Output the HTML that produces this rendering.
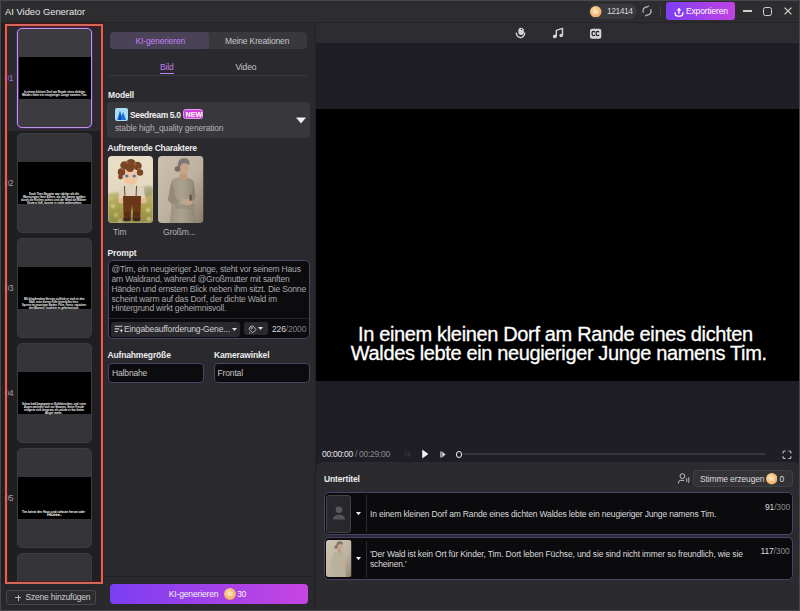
<!DOCTYPE html>
<html><head><meta charset="utf-8">
<style>
*{margin:0;padding:0;box-sizing:border-box;}
html,body{width:800px;height:611px;overflow:hidden;background:#2a292d;font-family:"Liberation Sans",sans-serif;color:#d8d8d8;}
.a{position:absolute;}
.t{position:absolute;white-space:nowrap;line-height:1;letter-spacing:-0.15px;}
</style></head>
<body>
<!-- window frame -->
<div class="a" style="left:0;top:0;width:800px;height:611px;background:#2a292d;"></div>
<!-- title bar -->
<div class="a" style="left:0;top:0;width:800px;height:22px;background:#2d2d30;"></div>
<div class="a" style="left:0;top:22px;width:800px;height:1px;background:#232326;"></div>
<div class="t" id="title" style="left:5px;top:7px;font-size:9.4px;letter-spacing:0;color:#e6e6e6;">AI Video Generator</div>

<!-- coin pill -->
<div class="a" style="left:589px;top:4px;width:48px;height:15px;border-radius:8px;background:#3a393d;"></div>
<svg class="a" style="left:590px;top:5.5px" width="11.5" height="11.5" viewBox="0 0 12 12"><defs><radialGradient id="cg590" cx="0.4" cy="0.35" r="0.7"><stop offset="0" stop-color="#fbdca8"/><stop offset="1" stop-color="#eba457"/></radialGradient></defs><circle cx="6" cy="6" r="6" fill="url(#cg590)"/><circle cx="6" cy="6" r="4.6" fill="none" stroke="#f6c98a" stroke-width="0.6"/><text x="6" y="7.9" text-anchor="middle" font-family="Liberation Sans" font-weight="bold" font-size="5.2" fill="#fff6e8" opacity="0.9">AI</text></svg>
<div class="t" id="coins" style="left:607px;top:7px;font-size:8.5px;letter-spacing:-0.48px;color:#d8d8d8;">121414</div>
<!-- refresh -->
<svg class="a" style="left:641.25px;top:5.2px" width="12" height="12" viewBox="0 0 12 12"><path d="M9.72 4.27 A4.1 4.1 0 0 1 4.94 9.96 M2.28 7.73 A4.1 4.1 0 0 1 7.06 2.04" stroke="#c4c4c6" stroke-width="1.2" fill="none"/><path d="M7.06 2.04 L7.45 0.59 M4.94 9.96 L4.55 11.41" stroke="#c4c4c6" stroke-width="1" fill="none"/></svg>
<div class="a" style="left:660px;top:6px;width:1px;height:10px;background:#444347;"></div>
<!-- export -->
<div class="a" style="left:666px;top:2px;width:69px;height:18px;border-radius:3px;background:linear-gradient(90deg,#7c3ef2,#c242e2);"></div>
<svg class="a" style="left:673.5px;top:6.5px" width="10" height="10" viewBox="0 0 10 10"><path d="M5 3 L5 6.8" stroke="#fff" stroke-width="1.3"/><path d="M2.6 3.4 L5 0.8 L7.4 3.4Z" fill="#fff"/><path d="M1.1 5.3 L1.1 6.2 Q1.1 9.1 4 9.1 L6 9.1 Q8.9 9.1 8.9 6.2 L8.9 5.3" stroke="#fff" stroke-width="1.2" fill="none"/></svg>
<div class="t" id="export" style="left:686px;top:7px;font-size:8.5px;color:#fff;">Exportieren</div>
<!-- window controls -->
<div class="a" style="left:743px;top:10.4px;width:9px;height:1.5px;background:#cfcfcf;"></div>
<div class="a" style="left:763px;top:7px;width:9px;height:9px;border:1.3px solid #d4d4d4;border-radius:2.5px;"></div>
<svg class="a" style="left:783.5px;top:7.3px" width="8" height="8" viewBox="0 0 8 8"><path d="M0.6 0.6 L7.4 7.4 M7.4 0.6 L0.6 7.4" stroke="#d4d4d4" stroke-width="1.2"/></svg>

<!-- LEFT SIDEBAR -->
<div class="a" style="left:1px;top:23px;width:103px;height:560px;background:#1f1f22;"></div>
<div class="a" style="left:7px;top:26px;width:94px;height:105px;background:#2b2a2e;"></div>
<div class="a" style="left:17px;top:28px;width:75px;height:100px;border-radius:5px;border:1.5px solid #c494ea;box-shadow:0 0 0 0.6px #5a2a90;background:#3c3b3f;"></div>
<div class="a" style="left:18.5px;top:57px;width:72px;height:42px;background:#000;"></div>
<div class="t" style="left:4.2px;top:74px;font-size:8.5px;letter-spacing:-0.2px;color:#9a6cf0;">01</div>
<svg class="a" style="left:22.5px;top:88.8px" width="63.0" height="5" viewBox="0 0 63.0 5"><text x="1" y="4" textLength="61.0" lengthAdjust="spacingAndGlyphs" font-family="Liberation Sans" font-size="3.4" font-weight="bold" fill="#ffffff">In einem kleinen Dorf am Rande eines dichten</text></svg>
<svg class="a" style="left:21px;top:91.8px" width="67" height="5" viewBox="0 0 67 5"><text x="1" y="4" textLength="65" lengthAdjust="spacingAndGlyphs" font-family="Liberation Sans" font-size="3.4" font-weight="bold" fill="#ffffff">Waldes lebte ein neugieriger Junge namens Tim.</text></svg>
<div class="a" style="left:17px;top:133px;width:75px;height:100px;border-radius:5px;border:1px solid #3d3c40;background:#353438;"></div>
<div class="a" style="left:18px;top:162px;width:73px;height:42px;background:#000;"></div>
<div class="t" style="left:4.2px;top:179px;font-size:8.5px;letter-spacing:-0.2px;color:#a0a0a4;">02</div>
<svg class="a" style="left:28px;top:190.8px" width="52" height="5" viewBox="0 0 52 5"><text x="1" y="4" textLength="50" lengthAdjust="spacingAndGlyphs" font-family="Liberation Sans" font-size="3.4" font-weight="bold" fill="#ffffff">Doch Tims Neugier war stärker als die</text></svg>
<svg class="a" style="left:21.5px;top:193.9px" width="64.5" height="5" viewBox="0 0 64.5 5"><text x="1" y="4" textLength="62.5" lengthAdjust="spacingAndGlyphs" font-family="Liberation Sans" font-size="3.4" font-weight="bold" fill="#ffffff">Warnungen ihrer Eltern, als die Sonne golden</text></svg>
<svg class="a" style="left:20px;top:196.9px" width="67" height="5" viewBox="0 0 67 5"><text x="1" y="4" textLength="65" lengthAdjust="spacingAndGlyphs" font-family="Liberation Sans" font-size="3.4" font-weight="bold" fill="#ffffff">durch die Kiefern schien und der Wind die Blätter</text></svg>
<svg class="a" style="left:26px;top:199.9px" width="57" height="5" viewBox="0 0 57 5"><text x="1" y="4" textLength="55" lengthAdjust="spacingAndGlyphs" font-family="Liberation Sans" font-size="3.4" font-weight="bold" fill="#ffffff">flüstern ließ, konnte er nicht widerstehen.</text></svg>
<div class="a" style="left:17px;top:238px;width:75px;height:100px;border-radius:5px;border:1px solid #3d3c40;background:#353438;"></div>
<div class="a" style="left:18px;top:267px;width:73px;height:42px;background:#000;"></div>
<div class="t" style="left:4.2px;top:284px;font-size:8.5px;letter-spacing:-0.2px;color:#a0a0a4;">03</div>
<svg class="a" style="left:22.5px;top:295.8px" width="62.5" height="5" viewBox="0 0 62.5 5"><text x="1" y="4" textLength="60.5" lengthAdjust="spacingAndGlyphs" font-family="Liberation Sans" font-size="3.4" font-weight="bold" fill="#ffffff">Mit klopfendem Herzen schlich er sich in den</text></svg>
<svg class="a" style="left:28px;top:298.9px" width="51" height="5" viewBox="0 0 51 5"><text x="1" y="4" textLength="49" lengthAdjust="spacingAndGlyphs" font-family="Liberation Sans" font-size="3.4" font-weight="bold" fill="#ffffff">Wald, seine kleinen Füße hinterließen leise</text></svg>
<svg class="a" style="left:21px;top:301.9px" width="66" height="5" viewBox="0 0 66 5"><text x="1" y="4" textLength="64" lengthAdjust="spacingAndGlyphs" font-family="Liberation Sans" font-size="3.4" font-weight="bold" fill="#ffffff">Spuren im moosigen Boden. Pilze, Farne, zwischen</text></svg>
<svg class="a" style="left:28px;top:304.9px" width="52" height="5" viewBox="0 0 52 5"><text x="1" y="4" textLength="50" lengthAdjust="spacingAndGlyphs" font-family="Liberation Sans" font-size="3.4" font-weight="bold" fill="#ffffff">den Bäumen, leuchtete es geheimnisvoll.</text></svg>
<div class="a" style="left:17px;top:343px;width:75px;height:100px;border-radius:5px;border:1px solid #3d3c40;background:#353438;"></div>
<div class="a" style="left:18px;top:372px;width:73px;height:42px;background:#000;"></div>
<div class="t" style="left:4.2px;top:389px;font-size:8.5px;letter-spacing:-0.2px;color:#a0a0a4;">04</div>
<svg class="a" style="left:21px;top:400.8px" width="66" height="5" viewBox="0 0 66 5"><text x="1" y="4" textLength="64" lengthAdjust="spacingAndGlyphs" font-family="Liberation Sans" font-size="3.4" font-weight="bold" fill="#ffffff">Schon bald begegnete er Eichhörnchen, und seine</text></svg>
<svg class="a" style="left:23px;top:403.9px" width="62" height="5" viewBox="0 0 62 5"><text x="1" y="4" textLength="60" lengthAdjust="spacingAndGlyphs" font-family="Liberation Sans" font-size="3.4" font-weight="bold" fill="#ffffff">Augen weiteten sich vor Staunen. Seine Freude</text></svg>
<svg class="a" style="left:23px;top:406.9px" width="62" height="5" viewBox="0 0 62 5"><text x="1" y="4" textLength="60" lengthAdjust="spacingAndGlyphs" font-family="Liberation Sans" font-size="3.4" font-weight="bold" fill="#ffffff">steigerte sich langsam, als würde er fast keine</text></svg>
<svg class="a" style="left:44px;top:409.9px" width="19" height="5" viewBox="0 0 19 5"><text x="1" y="4" textLength="17" lengthAdjust="spacingAndGlyphs" font-family="Liberation Sans" font-size="3.4" font-weight="bold" fill="#ffffff">Angst mehr.</text></svg>
<div class="a" style="left:17px;top:448px;width:75px;height:100px;border-radius:5px;border:1px solid #3d3c40;background:#353438;"></div>
<div class="a" style="left:18px;top:477px;width:73px;height:42px;background:#000;"></div>
<div class="t" style="left:4.2px;top:494px;font-size:8.5px;letter-spacing:-0.2px;color:#a0a0a4;">05</div>
<svg class="a" style="left:21px;top:508.5px" width="65" height="5" viewBox="0 0 65 5"><text x="1" y="4" textLength="63" lengthAdjust="spacingAndGlyphs" font-family="Liberation Sans" font-size="3.4" font-weight="bold" fill="#ffffff">Tim betrat den Haus und schaute herum oder</text></svg>
<svg class="a" style="left:46px;top:511.5px" width="17" height="5" viewBox="0 0 17 5"><text x="1" y="4" textLength="15" lengthAdjust="spacingAndGlyphs" font-family="Liberation Sans" font-size="3.4" font-weight="bold" fill="#ffffff">Hütte.</text></svg>
<div class="a" style="left:17px;top:553px;width:75px;height:100px;border-radius:5px;border:1px solid #3d3c40;background:#353438;"></div>
<div class="a" style="left:18px;top:582px;width:73px;height:42px;background:#000;"></div>
<div class="a" style="left:4.6px;top:23.8px;width:98.6px;height:560px;border:2.6px solid #d4665d;box-shadow:0 0 0 0.7px #5c1512, inset 0 0 0 0.7px #5c1512;"></div>
<div class="a" style="left:1px;top:584px;width:103px;height:26px;background:#28272b;"></div>
<div class="a" style="left:6px;top:590px;width:90px;height:15px;border:1px solid #48474b;border-radius:3px;background:#2c2b2f;"></div>
<div class="a" style="left:15px;top:597px;width:6px;height:1px;background:#b8b8b8;"></div>
<div class="a" style="left:17.5px;top:594.5px;width:1px;height:6px;background:#b8b8b8;"></div>
<div class="t" id="szene" style="left:25.5px;top:593.4px;font-size:8.5px;letter-spacing:-0.2px;color:#d0d0d0;">Szene hinzufügen</div>

<!-- MIDDLE PANEL -->
<div class="a" style="left:104px;top:23px;width:211px;height:587px;background:#2a292d;"></div>
<div class="a" style="left:315px;top:23px;width:1px;height:587px;background:#222125;"></div>
<!-- tabs -->
<div class="a" style="left:110px;top:32px;width:197px;height:17px;border-radius:4px;background:#39383c;"></div>
<div class="a" style="left:110px;top:32px;width:99px;height:17px;border-radius:4px;background:#4a4358;"></div>
<div class="t" id="tab1" style="left:135.5px;top:37px;font-size:8.5px;color:#c07ff0;">KI-generieren</div>
<div class="t" id="tab2" style="left:225px;top:37px;font-size:8.5px;color:#c8c8c8;">Meine Kreationen</div>
<div class="t" id="bild" style="left:160px;top:63px;font-size:8.5px;color:#c07ff0;">Bild</div>
<div class="a" style="left:160px;top:72.5px;width:14px;height:1.3px;background:#c07ff0;"></div>
<div class="t" id="video" style="left:235.5px;top:63px;font-size:8.5px;color:#c8c8c8;">Video</div>
<div class="a" style="left:109px;top:75px;width:198px;height:1px;background:#38373b;"></div>
<!-- Modell -->
<div class="t" id="modell" style="left:108px;top:90.5px;font-size:8.5px;font-weight:bold;color:#ececec;">Modell</div>
<div class="a" style="left:107px;top:102px;width:203px;height:36px;border-radius:4px;background:#38373b;"></div>
<svg class="a" style="left:115px;top:108px" width="13" height="13" viewBox="0 0 13 13"><rect x="0" y="0" width="13" height="13" rx="2" fill="#a9dcf7"/><path d="M2 12 L5 3 L6.5 8 L8 4 L11 12 Z" fill="#1c6fd8"/><path d="M5 3 L6 12 L4 12Z" fill="#0d3f9c"/></svg>
<div class="t" id="seed" style="left:130px;top:110.5px;font-size:8.5px;letter-spacing:-0.35px;font-weight:bold;color:#f0f0f0;">Seedream 5.0</div>
<div class="a" style="left:183.2px;top:109.2px;width:20px;height:10.2px;border-radius:2.5px;border:0.7px solid #e69af0;background:linear-gradient(90deg,#c244e0,#e040d8);"></div>
<div class="t" id="new" style="left:185.6px;top:110.8px;font-size:7.2px;letter-spacing:-0.1px;font-weight:bold;color:#fff;">NEW</div>
<div class="t" id="stable" style="left:115px;top:123.5px;font-size:8.5px;color:#b4b4b4;">stable high_quality generation</div>
<svg class="a" style="left:295.5px;top:116.8px" width="10" height="7" viewBox="0 0 10 7"><path d="M0.8 0.6 L9.2 0.6 Q9.8 0.6 9.4 1.2 L5.4 6 Q5 6.4 4.6 6 L0.6 1.2 Q0.2 0.6 0.8 0.6Z" fill="#f0f0f0"/></svg>
<!-- characters -->
<div class="t" id="auft" style="left:107.5px;top:144px;font-size:8.5px;letter-spacing:-0.24px;font-weight:bold;color:#ececec;">Auftretende Charaktere</div>
<svg class="a" style="left:107.5px;top:155.5px" width="45" height="67" viewBox="0 0 45 67">
<defs><clipPath id="cpT"><rect width="45" height="67" rx="4"/></clipPath>
<linearGradient id="gT" x1="0" y1="0" x2="0" y2="1"><stop offset="0" stop-color="#e9dfc8"/><stop offset="0.5" stop-color="#e4d9bf"/><stop offset="1" stop-color="#d4c9a0"/></linearGradient>
<linearGradient id="fT" x1="0" y1="0" x2="0" y2="1"><stop offset="0" stop-color="#c2bb80"/><stop offset="0.5" stop-color="#aaa150"/><stop offset="1" stop-color="#8e8a44"/></linearGradient>
<filter id="blT" x="-10%" y="-10%" width="120%" height="120%"><feGaussianBlur stdDeviation="0.9"/></filter>
<filter id="blT2"><feGaussianBlur stdDeviation="0.35"/></filter></defs>
<g clip-path="url(#cpT)">
<rect width="45" height="67" fill="url(#gT)"/>
<g filter="url(#blT)">
<path d="M0 38 Q10 35 22 37 T45 34 L45 67 L0 67Z" fill="url(#fT)"/>
<path d="M33 33 Q39 28 45 31 L45 40 L33 40Z" fill="#9d9a70" opacity="0.7"/>
<circle cx="5" cy="50" r="1.6" fill="#eee69a"/><circle cx="40" cy="54" r="1.8" fill="#ece09a"/><circle cx="8" cy="59" r="1.5" fill="#e2d880"/><circle cx="37" cy="45" r="1.4" fill="#efe8b0"/><circle cx="3" cy="43" r="1.2" fill="#ddd080"/><circle cx="41" cy="63" r="1.6" fill="#e8e0a0"/><circle cx="12" cy="65" r="1.4" fill="#d8d088"/>
</g>
<g filter="url(#blT2)">
<ellipse cx="13" cy="43" rx="2.8" ry="4.5" fill="#e6b894"/><ellipse cx="35" cy="43" rx="2.8" ry="4.5" fill="#e6b894"/>
<path d="M11 32 Q22 26 36 32 L37 42 L11 42Z" fill="#ddd2bf"/>
<path d="M16.5 30 L17 42 M28.5 30 L28 42" stroke="#5a3418" stroke-width="0.9"/>
<path d="M15 40 L33 40 L32.5 58 L25.5 59 L24 49 L22.5 59 L15.5 58Z" fill="#6a3719"/>
<path d="M16 56 L22.5 56 L23 63 L15.5 63Z M25 56 L32 56 L32.5 63 L24.5 63Z" fill="#5c2f15"/>
<ellipse cx="19" cy="63.5" rx="4" ry="1.8" fill="#3a2a22"/><ellipse cx="28.5" cy="63.5" rx="4" ry="1.8" fill="#3a2a22"/>
<ellipse cx="22.5" cy="21" rx="8" ry="8.3" fill="#f0c6a2"/>
<ellipse cx="18.8" cy="20" rx="1.7" ry="1.5" fill="#4c78b8"/><ellipse cx="26.2" cy="20" rx="1.7" ry="1.5" fill="#4c78b8"/>
<g fill="#7a4526"><circle cx="13.5" cy="16" r="3.8"/><circle cx="16.5" cy="9.5" r="4.2"/><circle cx="23" cy="7.5" r="4.6"/><circle cx="29.5" cy="10" r="4.2"/><circle cx="32" cy="16.5" r="3.2"/><circle cx="12.5" cy="21" r="2.4"/><circle cx="22" cy="12" r="4"/></g>
<g fill="#96603a"><circle cx="19" cy="6.5" r="1.5"/><circle cx="27" cy="8" r="1.4"/><circle cx="14.5" cy="13" r="1.3"/><circle cx="31" cy="13" r="1.2"/></g>
</g>
</g></svg>
<svg class="a" style="left:158px;top:155.5px" width="45.5" height="67" viewBox="0 0 45.5 67">
<defs><clipPath id="cpG"><rect width="45.5" height="67" rx="4"/></clipPath>
<linearGradient id="gG" x1="0" y1="0" x2="1" y2="1"><stop offset="0" stop-color="#cdc2b0"/><stop offset="0.55" stop-color="#bcb19e"/><stop offset="1" stop-color="#8a7e6c"/></linearGradient>
<linearGradient id="dG" x1="0" y1="0" x2="1" y2="0"><stop offset="0" stop-color="#9a907e"/><stop offset="0.5" stop-color="#aca290"/><stop offset="1" stop-color="#8e8472"/></linearGradient>
<filter id="blG"><feGaussianBlur stdDeviation="0.35"/></filter></defs>
<g clip-path="url(#cpG)">
<rect width="45.5" height="67" fill="url(#gG)"/>
<g filter="url(#blG)">
<path d="M13.5 25 Q16 21.5 24.5 21 Q33 21.5 35.5 25 L37.5 40 L35.5 46 L38 67 L12 67 L13.5 48 L10 44Z" fill="url(#dG)"/>
<path d="M13.5 25 L10 44 Q12 48 20 48.5 L21 44.5 Q15.5 42 16.5 35Z" fill="#948a78"/>
<path d="M35.5 25 L37.5 40 L35 46 L32 44 L34 35Z" fill="#8e8472"/>
<path d="M18 48 Q24 50 36 47 L37 52 Q25 54 17 52Z" fill="#958b79" opacity="0.7"/>
<ellipse cx="29.5" cy="46" rx="5.5" ry="3.2" fill="#c4a48c"/>
<rect x="31.5" y="38.5" width="2.2" height="6.5" rx="1" fill="#5e5048"/>
<path d="M22 17 L29 17 L29.5 23 L24 24.5 L21.5 23Z" fill="#bf987e"/>
<ellipse cx="25.5" cy="12" rx="5.2" ry="6.8" fill="#c8a288"/>
<path d="M19.8 12 Q19 2 26 2 Q32.8 2.2 31.2 9.5 Q29.5 7 25.8 7.2 Q22 7.6 21.5 13 Z" fill="#7e7973"/>
<circle cx="19.5" cy="13" r="2.8" fill="#716b65"/>
</g>
</g></svg>
<div class="t" id="tim" style="left:113px;top:228px;font-size:8.5px;color:#b4b4b4;">Tim</div>
<div class="t" id="gross" style="left:163px;top:228px;font-size:8.5px;color:#b4b4b4;">Großm...</div>
<!-- prompt -->
<div class="t" id="prompt" style="left:107.5px;top:249px;font-size:8.5px;font-weight:bold;color:#ececec;">Prompt</div>
<div class="a" style="left:108px;top:260px;width:202px;height:79px;border-radius:5px;border:1px solid #4f4264;background:#0c0b0e;"></div>
<div class="t" id="ptext1" style="left:111.5px;top:265.05px;font-size:8.5px;letter-spacing:-0.18px;color:#a8a8ac;">@Tim, ein neugieriger Junge, steht vor seinem Haus</div>
<div class="t" id="ptext2" style="left:111.5px;top:274.8px;font-size:8.5px;letter-spacing:-0.18px;color:#a8a8ac;">am Waldrand, während @Großmutter mit sanften</div>
<div class="t" id="ptext3" style="left:111.5px;top:284.7px;font-size:8.5px;letter-spacing:-0.18px;color:#a8a8ac;">Händen und ernstem Blick neben ihm sitzt. Die Sonne</div>
<div class="t" id="ptext4" style="left:111.5px;top:294.5px;font-size:8.5px;letter-spacing:-0.18px;color:#a8a8ac;">scheint warm auf das Dorf, der dichte Wald im</div>
<div class="t" id="ptext5" style="left:111.5px;top:304.2px;font-size:8.5px;letter-spacing:-0.18px;color:#a8a8ac;">Hintergrund wirkt geheimnisvoll.</div>
<div class="a" style="left:109px;top:318px;width:200px;height:1px;background:#242328;"></div>
<div class="a" style="left:111px;top:322px;width:129px;height:14.5px;border-radius:3px;background:#2a292d;"></div>
<svg class="a" style="left:114px;top:324.5px" width="10" height="8" viewBox="0 0 10 8"><path d="M0.8 1.3 L8.4 1.3 M0.8 3.9 L5.2 3.9 M0.8 6.5 L4 6.5" stroke="#d0d0d2" stroke-width="1.1"/><path d="M7.3 3.6 L8.1 5.2 L9.6 5.6 L8.1 6.1 L7.3 7.7 L6.6 6.1 L5.1 5.6 L6.6 5.2Z" fill="#d8d8da"/></svg>
<svg class="a" style="left:231.5px;top:327.5px" width="5" height="3" viewBox="0 0 5 3"><path d="M0 0 L5 0 L2.5 3Z" fill="#e0e0e0"/></svg>
<div class="a" style="left:244px;top:322px;width:23.5px;height:13px;border-radius:3px;background:#2a292d;"></div>
<svg class="a" style="left:247.5px;top:324.5px" width="9" height="9" viewBox="0 0 9 9" fill="none" stroke="#c8c8ca" stroke-width="0.9"><path d="M1 3.2 L3.3 1 L5.3 1.3 L8.1 4.6 L4.8 7.8 L1.5 4.9Z"/><circle cx="3.6" cy="3.1" r="0.7"/><path d="M1 8 L2.3 8"/></svg>
<svg class="a" style="left:258.3px;top:327px" width="5" height="3" viewBox="0 0 5 3"><path d="M0 0 L5 0 L2.5 3Z" fill="#e0e0e0"/></svg>
<div class="t" id="eing" style="left:124px;top:325px;font-size:8.5px;color:#d0d0d0;">Eingabeaufforderung-Gene...</div>
<div class="t" id="cnt" style="left:272px;top:325px;font-size:8.5px;color:#d8d8d8;">226<span style="color:#808084">/2000</span></div>
<!-- shot size -->
<div class="t" id="aufn" style="left:107.5px;top:350.5px;font-size:8.5px;font-weight:bold;color:#ececec;">Aufnahmegröße</div>
<div class="t" id="kam" style="left:214px;top:350.5px;font-size:8.5px;font-weight:bold;color:#ececec;">Kamerawinkel</div>
<div class="a" style="left:107.5px;top:363px;width:96px;height:19.5px;border-radius:4px;border:1px solid #4f4264;background:#0c0b0e;"></div>
<div class="a" style="left:214px;top:363px;width:95.5px;height:19.5px;border-radius:4px;border:1px solid #4f4264;background:#0c0b0e;"></div>
<div class="t" id="halb" style="left:112px;top:368.5px;font-size:8.5px;color:#c8c8c8;">Halbnahe</div>
<div class="t" id="front" style="left:217.5px;top:368.5px;font-size:8.5px;color:#c8c8c8;">Frontal</div>
<!-- bottom bar -->
<div class="a" style="left:104px;top:576px;width:211px;height:1px;background:#222125;"></div>
<div class="a" style="left:110px;top:583.5px;width:198px;height:20px;border-radius:4px;background:linear-gradient(90deg,#7b3ef2,#c645e0);"></div>
<div class="t" id="kigen" style="left:168.8px;top:590px;font-size:8.5px;color:#f4f4f4;">KI-generieren</div>
<svg class="a" style="left:223.5px;top:588px" width="12" height="12" viewBox="0 0 12 12"><defs><radialGradient id="cg223" cx="0.4" cy="0.35" r="0.7"><stop offset="0" stop-color="#fbdca8"/><stop offset="1" stop-color="#eba457"/></radialGradient></defs><circle cx="6" cy="6" r="6" fill="url(#cg223)"/><circle cx="6" cy="6" r="4.6" fill="none" stroke="#f6c98a" stroke-width="0.6"/><text x="6" y="7.9" text-anchor="middle" font-family="Liberation Sans" font-weight="bold" font-size="5.2" fill="#fff6e8" opacity="0.9">AI</text></svg>
<div class="t" id="thirty" style="left:237px;top:590px;font-size:8.5px;color:#f4f4f4;">30</div>

<!-- RIGHT AREA -->
<div class="a" style="left:316px;top:23px;width:484px;height:20px;background:#2d2c30;"></div>
<div class="a" style="left:316px;top:43px;width:484px;height:567px;background:#1f1d25;"></div>
<svg class="a" style="left:514px;top:26px" width="13" height="14" viewBox="0 0 13 14">
<path d="M4.2 5.5 Q4.2 1.8 7 1.8 Q8.6 1.8 9.3 3 L10.2 3.3 Q9.9 3.9 9.6 4.2 Q10 5 10 6 Q10 8.9 7 8.9 Q4.2 8.9 4.2 5.5Z" fill="#d4d4d6"/>
<circle cx="7.6" cy="3.4" r="0.7" fill="#2d2c30"/>
<path d="M2.2 6.6 Q2.5 11 6.5 11.6 Q10.5 11 10.8 6.6" stroke="#d4d4d6" stroke-width="1.3" fill="none"/>
<path d="M5.6 11.3 L7.4 11.3 L6.5 12.4Z" fill="#d4d4d6"/>
</svg>
<svg class="a" style="left:551px;top:26px" width="14" height="14" viewBox="0 0 14 14">
<circle cx="3.8" cy="10.4" r="1.9" fill="#d4d4d6"/><circle cx="10.2" cy="9.5" r="1.8" fill="#d4d4d6"/>
<path d="M5.3 10.4 L5.3 4.4 L11.5 2.4 L11.5 9.5" stroke="#d4d4d6" stroke-width="1.4" fill="none" stroke-linejoin="round"/>
</svg>
<svg class="a" style="left:589px;top:27.5px" width="13" height="11" viewBox="0 0 13 11">
<rect x="1" y="0.8" width="11.3" height="9.9" rx="2.2" fill="#d6d6d8"/>
<path d="M5.9 4.2 Q5.4 3.3 4.5 3.3 Q3 3.3 3 5.5 Q3 7.7 4.5 7.7 Q5.4 7.7 5.9 6.8 M10 4.2 Q9.5 3.3 8.6 3.3 Q7.1 3.3 7.1 5.5 Q7.1 7.7 8.6 7.7 Q9.5 7.7 10 6.8" stroke="#222126" stroke-width="1.2" fill="none"/>
</svg>
<div class="a" style="left:316px;top:109px;width:484px;height:272px;background:#000;"></div>
<div class="t" id="cap1" style="left:358px;-webkit-text-stroke:0.3px #fff;top:324px;font-size:20px;letter-spacing:-0.35px;color:#fff;">In einem kleinen Dorf am Rande eines dichten</div>
<div class="t" id="cap2" style="left:350.8px;-webkit-text-stroke:0.3px #fff;top:343px;font-size:20px;letter-spacing:-0.37px;color:#fff;">Waldes lebte ein neugieriger Junge namens Tim.</div>
<!-- timeline -->
<div class="t" id="time" style="left:322px;top:450px;font-size:8.5px;letter-spacing:-0.28px;color:#e8e8e8;">00:00:00<span style="color:#8a8a90"> / 00:29:00</span></div>
<svg class="a" style="left:404px;top:450px" width="8" height="9" viewBox="0 0 8 9"><path d="M6 1.4 L6 7.6 L2.2 4.5Z" fill="#34333b"/><rect x="1.2" y="1.4" width="1" height="6.2" fill="#34333b"/></svg>
<svg class="a" style="left:421px;top:449px" width="8" height="10" viewBox="0 0 8 10"><path d="M1.2 0.8 Q1 0.5 1.5 0.7 L6.8 4.6 Q7.2 5 6.8 5.4 L1.5 9.3 Q1 9.5 1.2 9.2Z" fill="#f2f2f2"/></svg>
<svg class="a" style="left:438.5px;top:450px" width="8" height="9" viewBox="0 0 8 9"><rect x="1.3" y="1.4" width="1.3" height="6.2" fill="#d0d0d2"/><path d="M3.2 1.4 L3.2 7.6 L6.6 4.5Z" fill="#d0d0d2"/></svg>
<svg class="a" style="left:781.5px;top:449.5px" width="10" height="9.5" viewBox="0 0 10 9.5" fill="none" stroke="#c6c6ca" stroke-width="1.1" stroke-linecap="round">
<path d="M1 3 L1 2.6 Q1 1 2.6 1 L3.2 1 M6.8 1 L7.4 1 Q9 1 9 2.6 L9 3 M9 6.5 L9 6.9 Q9 8.5 7.4 8.5 L6.8 8.5 M3.2 8.5 L2.6 8.5 Q1 8.5 1 6.9 L1 6.5"/></svg>
<div class="a" style="left:462.5px;top:453.3px;width:302.5px;height:2px;background:#38373e;"></div>
<div class="a" style="left:455.9px;top:451px;width:6.6px;height:6.6px;border-radius:50%;border:1.5px solid #f0f0f0;"></div>

<!-- subtitle panel -->
<div class="a" style="left:316px;top:462px;width:482.5px;height:148px;border-radius:6px 5px 0 0;background:#2b2a2f;"></div>
<div class="t" id="unter" style="left:324px;top:474.5px;font-size:8.5px;font-weight:bold;color:#ececec;">Untertitel</div>
<div class="a" style="left:692.5px;top:470px;width:100.5px;height:17px;border-radius:4px;border:1px solid #414045;background:#333237;"></div>
<div class="t" id="stimme" style="left:700px;top:474.5px;font-size:8.5px;letter-spacing:-0.15px;color:#dcdcdc;">Stimme erzeugen</div>
<svg class="a" style="left:765.5px;top:473px" width="11.5" height="11.5" viewBox="0 0 12 12"><defs><radialGradient id="cg765" cx="0.4" cy="0.35" r="0.7"><stop offset="0" stop-color="#fbdca8"/><stop offset="1" stop-color="#eba457"/></radialGradient></defs><circle cx="6" cy="6" r="6" fill="url(#cg765)"/><circle cx="6" cy="6" r="4.6" fill="none" stroke="#f6c98a" stroke-width="0.6"/><text x="6" y="7.9" text-anchor="middle" font-family="Liberation Sans" font-weight="bold" font-size="5.2" fill="#fff6e8" opacity="0.9">AI</text></svg>
<div class="t" id="zero" style="left:779.5px;top:474.5px;font-size:8.5px;color:#dcdcdc;">0</div>

<div class="a" style="left:324px;top:492px;width:469px;height:43px;border-radius:5px;border:1.5px solid #4e3d6e;background:#0b0a0d;"></div>
<div class="a" style="left:324px;top:536.8px;width:469px;height:43px;border-radius:5px;border:1.5px solid #4e3d6e;background:#0b0a0d;"></div>
<div class="a" style="left:326px;top:495px;width:25px;height:37.5px;border-radius:3px;border:1px solid #434246;background:#28272b;"></div>
<div class="a" style="left:366px;top:495px;width:1px;height:37px;background:#2a292e;"></div>
<div class="a" style="left:366px;top:541px;width:1px;height:37px;background:#2a292e;"></div>
<svg class="a" style="left:332px;top:505px" width="14" height="15" viewBox="0 0 14 15"><circle cx="7" cy="4.7" r="3.3" fill="#58575c"/><path d="M8 2 L10.8 3.2 L9 4.5Z" fill="#48474b"/><path d="M0.8 14.4 Q1.5 9.8 7 9.8 Q12.5 9.8 13.2 14.4Z" fill="#545358"/></svg>
<svg class="a" style="left:356.3px;top:512px" width="5" height="3.5" viewBox="0 0 5 3.5"><path d="M0 0 L5 0 L2.5 3.3Z" fill="#f0f0f0"/></svg>
<svg class="a" style="left:356.3px;top:557px" width="5" height="3.5" viewBox="0 0 5 3.5"><path d="M0 0 L5 0 L2.5 3.3Z" fill="#f0f0f0"/></svg>
<svg class="a" style="left:326px;top:540px" width="25.5" height="37" viewBox="0 0 25.5 37">
<defs><clipPath id="cpA"><rect width="25.5" height="37" rx="2.5"/></clipPath>
<linearGradient id="gA" x1="0" y1="0" x2="1" y2="1"><stop offset="0" stop-color="#cfc5b3"/><stop offset="0.6" stop-color="#beb3a0"/><stop offset="1" stop-color="#8e8270"/></linearGradient></defs>
<g clip-path="url(#cpA)"><rect width="25.5" height="37" fill="url(#gA)"/>
<path d="M7 14 Q9 11.5 13 11.3 Q17 11.5 19 14 L20 22 L19 26 L20 37 L6 37 L7 27 L5 24Z" fill="#b9b09e"/>
<ellipse cx="16" cy="25" rx="3" ry="1.8" fill="#c8a890"/>
<path d="M11.5 9 L15 9 L15.3 12.5 L12 13Z" fill="#c19a80"/>
<ellipse cx="13.5" cy="6.5" rx="3" ry="3.8" fill="#caa48a"/>
<path d="M10.2 6.5 Q10 1.2 13.8 1.2 Q17.3 1.4 16.8 5 Q15.8 3.8 13.8 3.9 Q11.6 4.2 11.3 7Z" fill="#7e7973"/>
<circle cx="10" cy="7" r="1.7" fill="#7a746e"/>
</g></svg>
<svg class="a" style="left:677px;top:472px" width="14" height="13" viewBox="0 0 14 13" fill="none" stroke="#c4c4c8" stroke-width="1"><circle cx="5.4" cy="4.1" r="2.4"/><path d="M1.4 11.4 Q1.4 8.5 3.5 8.4 L7.2 8.4"/><path d="M9.5 6.3 Q10.4 8 9.5 9.8 M11.4 5.4 Q12.8 8 11.4 10.8"/></svg>
<div class="t" id="row1" style="left:370px;top:509.5px;font-size:8.5px;letter-spacing:-0.16px;color:#dcdcdc;">In einem kleinen Dorf am Rande eines dichten Waldes lebte ein neugieriger Junge namens Tim.</div>
<div class="a" id="row2" style="left:370px;top:549px;font-size:8.5px;letter-spacing:-0.15px;line-height:10px;color:#dcdcdc;white-space:nowrap;">'Der Wald ist kein Ort für Kinder, Tim. Dort leben Füchse, und sie sind nicht immer so freundlich, wie sie<br>scheinen.'</div>
<div class="t" id="c91" style="left:765px;top:502.5px;font-size:8.5px;color:#dcdcdc;">91<span style="color:#8a8a90">/300</span></div>
<div class="t" id="c117" style="left:760.5px;top:547px;font-size:8.5px;color:#dcdcdc;">117<span style="color:#8a8a90">/300</span></div>

<!-- window border -->
<div class="a" style="left:0;top:0;width:800px;height:611px;border:1px solid #48484b;border-bottom-width:1px;"></div>
</body></html>
